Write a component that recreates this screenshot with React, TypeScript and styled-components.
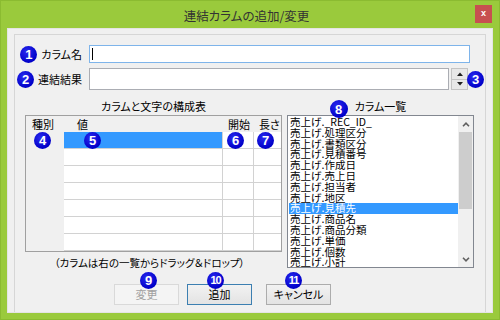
import styled, { createGlobalStyle } from "styled-components";

const GlobalStyle = createGlobalStyle`
  html, body {
    margin: 0;
    padding: 0;
    background: #9aca3c;
  }
  body {
    font-family: "Noto Sans CJK JP", "Noto Sans", sans-serif;
    font-feature-settings: "palt";
    color: #000;
  }
`;

const Window = styled.div`
  width: 500px;
  height: 320px;
  box-sizing: border-box;
  background: #9aca3c;
  border: 1px solid #8bbb31;
  display: flex;
  flex-direction: column;
`;

const TitleBar = styled.div`
  height: 27px;
  display: grid;
  grid-template-columns: 1fr auto 1fr;
  padding-right: 7px;
`;

const Title = styled.div`
  grid-column: 2;
  font-size: 12.5px;
  line-height: 29px;
  color: #333;
`;

const CloseButton = styled.div`
  grid-column: 3;
  justify-self: end;
  margin-top: 4px;
  width: 17px;
  height: 18px;
  background: #c75050;
  color: #fff;
  font: bold 9px/17px "Liberation Sans", Arial, sans-serif;
  text-align: center;
`;

const Client = styled.div`
  flex: 1;
  margin: 0 6px 6px 6px;
  box-sizing: border-box;
  background: #f0f0f0;
  border: 1px solid #e4e4e4;
  padding: 5px 6px 0 6px;
  display: flex;
  flex-direction: column;
`;

const Panel = styled.div`
  flex: 1;
  border: 1px solid #d6d6d6;
  border-bottom: none;
  display: flex;
  flex-direction: column;
`;

const Badge = styled.span<{ $small?: boolean }>`
  flex: none;
  display: inline-flex;
  align-items: center;
  justify-content: center;
  width: 17px;
  height: 17px;
  border-radius: 50%;
  background: radial-gradient(circle at 40% 35%, #2a2af0, #0000c8 70%);
  color: #fff;
  font-family: "Liberation Sans", Arial, sans-serif;
  font-weight: bold;
  font-size: ${(p) => (p.$small ? "11px" : "13px")};
  letter-spacing: ${(p) => (p.$small ? "-1px" : "0")};
  line-height: 1;
`;

const FormRow = styled.div<{ $h: number; $top: number }>`
  display: flex;
  align-items: center;
  height: ${(p) => p.$h}px;
  margin-top: ${(p) => p.$top}px;
`;

const LabelCell = styled.div`
  width: 74px;
  box-sizing: border-box;
  padding-right: 7px;
  display: flex;
  justify-content: flex-end;
  align-items: center;
  gap: 4px;
  font-size: 11px;
`;

const TextBox = styled.div<{ $focused?: boolean }>`
  flex: 1;
  align-self: stretch;
  box-sizing: border-box;
  background: #fff;
  border: 1px solid ${(p) => (p.$focused ? "#7eb4ea" : "#abadb3")};
  display: flex;
  align-items: center;
  padding-left: 2px;
`;

const Caret = styled.span`
  width: 1px;
  height: 12px;
  background: #000;
`;

const Spinner = styled.div`
  width: 17px;
  align-self: stretch;
  margin-left: 2px;
  display: flex;
  flex-direction: column;
`;

const SpinHalf = styled.div`
  flex: 1;
  box-sizing: border-box;
  border: 1px solid #c4c4c4;
  background: #e8e8e8;
  display: flex;
  align-items: center;
  justify-content: center;
  & + & {
    border-top: none;
  }
`;

const Middle = styled.div`
  display: flex;
  gap: 5px;
  padding-left: 10px;
  margin-top: 10px;
  height: 172px;
`;

const Column = styled.div<{ $w: number }>`
  width: ${(p) => p.$w}px;
  display: flex;
  flex-direction: column;
`;

const ColHeading = styled.div`
  height: 15px;
  font-size: 11px;
  line-height: 13px;
  text-align: center;
`;

const HeadingText = styled.span`
  position: relative;
  display: inline-block;
`;

const HeadingBadge = styled(Badge)`
  position: absolute;
  right: calc(100% + 7px);
  top: 0px;
  width: 18px;
  height: 18px;
`;

const Table = styled.div`
  height: 137px;
  box-sizing: border-box;
  border: 1px solid #a0a0a0;
  background: #fff;
  display: grid;
  grid-template-columns: 38px 159px 31px 1fr;
  grid-template-rows: 16px repeat(7, 17px);
`;

const HeadCell = styled.div<{ $pad: number }>`
  background: #f0f0f0;
  font-size: 11px;
  line-height: 16px;
  white-space: nowrap;
  padding-left: ${(p) => p.$pad}px;
`;

const KindCell = styled.div<{ $pad?: number }>`
  background: #f0f0f0;
  display: flex;
  align-items: center;
  padding-left: ${(p) => p.$pad ?? 0}px;
`;

const Cell = styled.div<{ $selected?: boolean; $last?: boolean; $pad?: number }>`
  box-sizing: border-box;
  background: ${(p) => (p.$selected ? "#3399ff" : "#fff")};
  border-bottom: 1px solid #d2d2d2;
  border-right: ${(p) => (p.$last ? "none" : "1px solid #d2d2d2")};
  display: flex;
  align-items: center;
  padding-left: ${(p) => p.$pad ?? 0}px;
`;

const Caption = styled.div`
  height: 20px;
  font-size: 10.5px;
  line-height: 21px;
  text-align: center;
  padding-right: 8px;
  white-space: nowrap;
`;

const ListBox = styled.div`
  height: 153px;
  box-sizing: border-box;
  border: 1px solid #828790;
  background: #fff;
  display: flex;
`;

const Items = styled.div`
  flex: 1;
  overflow: hidden;
  padding: 1px 0 0 1px;
`;

const Item = styled.div<{ $selected?: boolean }>`
  height: 10.8px;
  font-size: 10.5px;
  line-height: 10.8px;
  padding-left: 1px;
  white-space: nowrap;
  font-feature-settings: normal;
  background: ${(p) => (p.$selected ? "#3399ff" : "transparent")};
  color: ${(p) => (p.$selected ? "#fff" : "#000")};
`;

const ScrollBar = styled.div`
  width: 15px;
  background: #f0f0f0;
  display: flex;
  flex-direction: column;
`;

const ScrollArrow = styled.div`
  height: 16px;
  display: flex;
  align-items: center;
  justify-content: center;
`;

const Track = styled.div`
  flex: 1;
`;

const Thumb = styled.div`
  height: 77px;
  margin: 0 1px;
  background: #cdcdcd;
`;

const ButtonRow = styled.div`
  display: flex;
  margin-top: 12px;
  padding-left: 99px;
`;

const Button = styled.div<{ $variant?: "disabled" | "default" | "normal"; $gap?: number }>`
  position: relative;
  width: 65px;
  height: 21px;
  box-sizing: border-box;
  margin-left: ${(p) => p.$gap ?? 0}px;
  font-size: 11px;
  line-height: 19px;
  text-align: center;
  border: 1px solid
    ${(p) =>
      p.$variant === "disabled" ? "#d9d9d9" : p.$variant === "default" ? "#3c7fb1" : "#acacac"};
  background: ${(p) =>
    p.$variant === "disabled" ? "#f4f4f4" : "linear-gradient(#f2f2f2, #e3e3e3)"};
  color: ${(p) => (p.$variant === "disabled" ? "#a0a0a0" : "#000")};
`;

const ButtonBadge = styled(Badge)<{ $left: number }>`
  position: absolute;
  top: -13px;
  left: ${(p) => p.$left}px;
`;

const Chevron = ({ up }: { up?: boolean }) => (
  <svg width="8" height="5" viewBox="0 0 8 5">
    <path
      d={up ? "M1 4.2 L4 1.2 L7 4.2" : "M1 0.8 L4 3.8 L7 0.8"}
      fill="none"
      stroke="#606060"
      strokeWidth="1.6"
    />
  </svg>
);

const Tri = ({ up }: { up?: boolean }) => (
  <svg width="6" height="4" viewBox="0 0 6 4">
    <path d={up ? "M0 4 L3 0.5 L6 4 Z" : "M0 0 L3 3.5 L6 0 Z"} fill="#202020" />
  </svg>
);

const columns = [
  "売上げ._REC_ID_",
  "売上げ.処理区分",
  "売上げ.書類区分",
  "売上げ.見積番号",
  "売上げ.作成日",
  "売上げ.売上日",
  "売上げ.担当者",
  "売上げ.地区",
  "売上げ.見積先",
  "売上げ.商品名",
  "売上げ.商品分類",
  "売上げ.単価",
  "売上げ.個数",
  "売上げ.小計",
];

const selectedColumn = 8;

function App() {
  const rows = [0, 1, 2, 3, 4, 5, 6];
  return (
    <Window>
      <GlobalStyle />
      <TitleBar>
        <Title>連結カラムの追加/変更</Title>
        <CloseButton>x</CloseButton>
      </TitleBar>
      <Client>
        <Panel>
          <FormRow $h={18} $top={10} style={{ marginRight: 15 }}>
            <LabelCell>
              <Badge>1</Badge>
              カラム名
            </LabelCell>
            <TextBox $focused>
              <Caret />
            </TextBox>
          </FormRow>
          <FormRow $h={22} $top={5} style={{ paddingRight: 1 }}>
            <LabelCell>
              <Badge>2</Badge>
              連結結果
            </LabelCell>
            <TextBox />
            <Spinner>
              <SpinHalf>
                <Tri up />
              </SpinHalf>
              <SpinHalf>
                <Tri />
              </SpinHalf>
            </Spinner>
            <Badge style={{ marginLeft: -1 }}>3</Badge>
          </FormRow>

          <Middle>
            <Column $w={257}>
              <ColHeading>カラムと文字の構成表</ColHeading>
              <Table>
                <HeadCell $pad={6}>種別</HeadCell>
                <HeadCell $pad={13}>値</HeadCell>
                <HeadCell $pad={5}>開始</HeadCell>
                <HeadCell $pad={5}>長さ</HeadCell>
                {rows.map((r) =>
                  r === 0 ? (
                    [
                      <KindCell key="k0" $pad={8}>
                        <Badge>4</Badge>
                      </KindCell>,
                      <Cell key="v0" $selected $pad={20}>
                        <Badge>5</Badge>
                      </Cell>,
                      <Cell key="s0" $pad={4}>
                        <Badge>6</Badge>
                      </Cell>,
                      <Cell key="l0" $last $pad={3}>
                        <Badge>7</Badge>
                      </Cell>,
                    ]
                  ) : (
                    [
                      <KindCell key={`k${r}`} />,
                      <Cell key={`v${r}`} />,
                      <Cell key={`s${r}`} />,
                      <Cell key={`l${r}`} $last />,
                    ]
                  )
                )}
              </Table>
              <Caption>（カラムは右の一覧からドラッグ＆ドロップ）</Caption>
            </Column>
            <Column $w={187}>
              <ColHeading>
                <HeadingText>
                  <HeadingBadge>8</HeadingBadge>
                  カラム一覧
                </HeadingText>
              </ColHeading>
              <ListBox>
                <Items>
                  {columns.map((c, i) => (
                    <Item key={c} $selected={i === selectedColumn}>
                      {c}
                    </Item>
                  ))}
                </Items>
                <ScrollBar>
                  <ScrollArrow>
                    <Chevron up />
                  </ScrollArrow>
                  <Track>
                    <Thumb />
                  </Track>
                  <ScrollArrow>
                    <Chevron />
                  </ScrollArrow>
                </ScrollBar>
              </ListBox>
            </Column>
          </Middle>

          <ButtonRow>
            <Button $variant="disabled">
              <ButtonBadge $left={25}>9</ButtonBadge>
              変更
            </Button>
            <Button $variant="default" $gap={8}>
              <ButtonBadge $left={19} $small>
                10
              </ButtonBadge>
              追加
            </Button>
            <Button $variant="normal" $gap={14}>
              <ButtonBadge $left={18} $small>
                11
              </ButtonBadge>
              キャンセル
            </Button>
          </ButtonRow>
        </Panel>
      </Client>
    </Window>
  );
}

export default App;
